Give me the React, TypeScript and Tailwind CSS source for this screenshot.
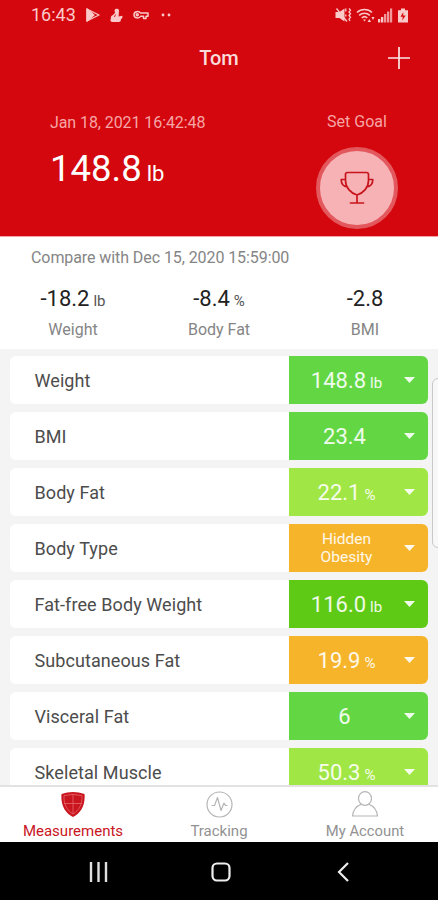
interface Reading {
  value: string;
  unit?: string;
  label: string;
}

interface Measurement extends Reading {
  color: string;
}

const CHANGES: Reading[] = [
  { value: '-18.2', unit: 'lb', label: 'Weight' },
  { value: '-8.4', unit: '%', label: 'Body Fat' },
  { value: '-2.8', label: 'BMI' },
];

const MEASUREMENTS: Measurement[] = [
  { label: 'Weight', value: '148.8', unit: 'lb', color: 'bg-[#63d743]' },
  { label: 'BMI', value: '23.4', color: 'bg-[#63d743]' },
  { label: 'Body Fat', value: '22.1', unit: '%', color: 'bg-[#a0e644]' },
  { label: 'Body Type', value: 'Hidden Obesity', color: 'bg-[#f6b42b]' },
  { label: 'Fat-free Body Weight', value: '116.0', unit: 'lb', color: 'bg-[#5eca15]' },
  { label: 'Subcutaneous Fat', value: '19.9', unit: '%', color: 'bg-[#f6b42b]' },
  { label: 'Visceral Fat', value: '6', color: 'bg-[#63d743]' },
  { label: 'Skeletal Muscle', value: '50.3', unit: '%', color: 'bg-[#a0e644]' },
];

function StatusBar() {
  return (
    <div className="flex h-[30px] items-center justify-between pl-[31px] pr-[29px] text-[#fbc9c9]">
      <div className="flex items-center">
        <span className="w-[54px] text-[18px] leading-[30px]">16:43</span>
        <svg className="ml-px" width="14" height="14" viewBox="0 0 14 14" fill="none" stroke="currentColor" strokeWidth="1.3" strokeLinejoin="round">
          <path d="M1 1v12L13 7z" />
          <path d="M1 1l7 6-7 6z" fill="currentColor" />
        </svg>
        <svg className="ml-[10px]" width="13" height="15" viewBox="0 0 13 15" fill="currentColor">
          <path d="M4.500 2C5.500.3 9 .3 9 2.800L8.600 8.500l3.700-.7c.6 1.800-.3 3-1.500 3.400.4 1.500-.4 2.800-2.300 2.800H2.500C.3 14 0 11.500 1 10.500c-.5-1.400.2-3 1.600-3.200L5 5z" />
          <path d="M5.500 6.500L4.500 9" stroke="#d3070d" strokeWidth=".9" />
        </svg>
        <svg className="ml-[10px]" width="16" height="10" viewBox="0 0 16 10" fill="none" stroke="currentColor" strokeWidth="1.500" strokeLinejoin="round">
          <path d="M7.400 3C6.500 1.200 1 .6 1 4.700S6.500 8.500 7.600 6.200H10.500V8.500H13V6.200H15V3z" />
          <circle cx="4.300" cy="4.700" r="1" />
        </svg>
        <svg className="ml-[12px]" width="12" height="4" viewBox="0 0 12 4" fill="currentColor">
          <circle cx="2" cy="2" r="1.400" />
          <circle cx="8" cy="2" r="1.400" />
        </svg>
      </div>
      <div className="flex items-center">
        {/* Vibrate / muted */}
        <svg width="17" height="16" viewBox="0 0 17 16">
          <path d="M.5 5H4.500l5-3.500v13l-5-3.500H.5z" fill="currentColor" />
          <path d="M1.500 1.500L12 14.500M10.800 1.500v3M10.800 7.500v2M14 1.500l1.500 1.800L14 5l1.500 1.800L14 8.500l1.500 1.800L14 12l1 2" fill="none" stroke="currentColor" strokeWidth="1.300" />
        </svg>
        <svg className="ml-[4px]" width="20" height="15" viewBox="0 0 20 15" fill="none" stroke="currentColor" strokeWidth="1.500">
          <path d="M1 4.500C5 .4 12 .4 16 4.500M3.200 7.400c3-3 7.600-3 10.600 0M5.700 10c1.700-1.600 4-1.600 5.600 0" />
          <path d="M7 11.500h3l-1.500 2z M11.500 14l2-3 1.500 3z M15.500 9h3l-1.500 3z" fill="currentColor" stroke="none" />
        </svg>
        <svg className="ml-[2px]" width="15" height="15" viewBox="0 0 15 15" fill="currentColor">
          <path d="M0 11h2.300v3.500H0zM3 9h2.300v5.500H3z" />
          <path d="M6 6h2.300v8.500H6zM9 3.500h2.300v11H9zM12 .5h2.200v14H12z" opacity=".75" />
        </svg>
        <svg className="ml-[4px]" width="12" height="15" viewBox="0 0 12 15">
          <path d="M4 .5h4v1.800h3v12.200H1V2.300h3z" fill="currentColor" />
          <path d="M6.300 4L3.500 8.700h2.300L5.200 12.500l3.500-5H6.200z" fill="#d3070d" />
        </svg>
      </div>
    </div>
  );
}

function Header() {
  return (
    <header className="h-[236px] shrink-0 bg-[#d3070d]">
      <StatusBar />
      <div className="grid h-[55px] grid-cols-3 items-center px-[28px]">
        <span />
        <h1 className="text-center text-[20px] font-medium leading-[24px] text-[#fbdada]">Tom</h1>
        <svg className="justify-self-end" width="22" height="22" viewBox="0 0 22 22" stroke="#fde6e6" strokeWidth="1.700">
          <path d="M11 0v22M0 11h22" />
        </svg>
      </div>
      <div className="flex justify-between pl-[50px] pr-[40px] pt-[28px]">
        <div>
          <p className="text-[16px] leading-[20px] tracking-[-0.08px] text-[#f7a5a5]">Jan 18, 2021 16:42:48</p>
          <p className="mt-[12px] flex items-baseline text-white">
            <span className="text-[36.500px] leading-[48px]">148.8</span>
            <span className="ml-[5px] text-[22px]">lb</span>
          </p>
        </div>
        <div className="flex flex-col items-center">
          <p className="text-[16px] leading-[18px] text-[#f7a5a5]">Set Goal</p>
          <div className="mt-[16px] flex size-[82px] items-center justify-center rounded-full border-4 border-[#e2585d] bg-[#f6b2b5]">
            <svg width="34" height="34" viewBox="0 0 34 34" fill="none" stroke="#c8141c" strokeWidth="1.700" strokeLinecap="round" strokeLinejoin="round">
              <path d="M5.500 3.500q0-2 2-2h19q2 0 2 2v6c0 7-5 12.500-11.500 14.500C10.500 22 5.500 16.500 5.500 9.500zM5.500 8.500H1.200c0 4.500 2 7 6.300 7.500M28.500 8.500h4.300c0 4.500-2 7-6.300 7.500M17 24v7M10.500 32h13" />
            </svg>
          </div>
        </div>
      </div>
    </header>
  );
}

function Comparison() {
  return (
    <section className="h-[113px] shrink-0 border-t border-[#f6a1a4] bg-white text-[#858585]">
      <p className="pl-[31px] pt-[11px] text-[16px] leading-[20px] tracking-[-0.08px]">Compare with Dec 15, 2020 15:59:00</p>
      <div className="mt-[17px] grid grid-cols-3">
        {CHANGES.map(c => (
          <div key={c.label} className="text-center">
            <p className="flex items-baseline justify-center text-[#222]">
              <span className="text-[22px] leading-[28px]">{c.value}</span>
              {c.unit && <span className="ml-[4px] text-[15px] text-[#555]">{c.unit}</span>}
            </p>
            <p className="mt-[7px] text-[16px] leading-[20px]">{c.label}</p>
          </div>
        ))}
      </div>
    </section>
  );
}

function MeasurementRow({ m }: { m: Measurement }) {
  return (
    <div className="flex h-[48px] shrink-0 overflow-hidden rounded-[6px] bg-white">
      <div className="flex w-[279px] items-center pl-[24.500px] text-[18px] tracking-[0.08px] text-[#4c4c4c]">{m.label}</div>
      <button className={`flex flex-1 items-center pr-[13px] text-white/90 ${m.color}`}>
        {m.value.includes(' ') ? (
          <span className="flex-1 px-5 text-center text-[15.500px] leading-[18px]">{m.value}</span>
        ) : (
          <span className={`flex flex-1 items-baseline justify-center pt-[2px] ${m.unit ? '' : 'pr-[4px]'}`}>
            <span className="text-[22px] leading-[28px]">{m.value}</span>
            {m.unit && <span className="ml-[4px] text-[15px]">{m.unit}</span>}
          </span>
        )}
        <svg width="11" height="6" viewBox="0 0 11 6" fill="currentColor">
          <path d="M0 0h11L5.500 6z" />
        </svg>
      </button>
    </div>
  );
}

function TabBar() {
  return (
    <nav className="grid h-[57px] shrink-0 grid-cols-3 border-t-2 border-[#e2e2e2] bg-white text-[15px] leading-[18px] text-[#929292]">
      <a className="flex flex-col items-center pt-[4px] text-[#c9151e]">
        <svg width="26" height="27" viewBox="0 0 26 27">
          <path d="M1.500 3Q13-1 24.500 3C25.500 14 21 22 13 26 5 22 .5 14 1.500 3z" fill="#c9151e" />
          <path d="M4 4.700Q13 2 22 4.700C22.500 13 19 19.500 13 23 7 19.500 3.500 13 4 4.700zM13 3v20M4 12.500h18" fill="none" stroke="#e8666b" strokeWidth=".8" />
        </svg>
        <span className="mt-[4px]">Measurements</span>
      </a>
      <a className="flex flex-col items-center pt-[4px]">
        <svg width="27" height="27" viewBox="0 0 27 27" fill="none" stroke="#b5b5b5" strokeWidth="1.200" strokeLinejoin="round">
          <circle cx="13.500" cy="13.500" r="12.500" />
          <path d="M5.500 14.500h3l3-8 3.500 13 3-7.500 1.500 2.500h2" />
        </svg>
        <span className="mt-[4px]">Tracking</span>
      </a>
      <a className="flex flex-col items-center pt-[4px]">
        <svg width="28" height="27" viewBox="0 0 28 27" fill="none" stroke="#b5b5b5" strokeWidth="1.200">
          <path d="M10.500 13C5.500 15 2 19 1.500 25h25c-.5-6-4-10-9-12" />
          <ellipse cx="14" cy="7.500" rx="6.500" ry="6.800" />
        </svg>
        <span className="mt-[4px] text-[14.800px]">My Account</span>
      </a>
    </nav>
  );
}

function SystemNav() {
  return (
    <div className="flex h-[58px] shrink-0 items-center bg-black pl-[89px] pt-[2px]">
      <svg width="19" height="20" viewBox="0 0 19 20" stroke="#dedede" strokeWidth="2.400">
        <path d="M2 0v20M9.500 0v20M17 0v20" />
      </svg>
      <svg className="ml-[103px]" width="20" height="20" viewBox="0 0 20 20" fill="none" stroke="#eee" strokeWidth="2.200">
        <rect x="1.500" y="1.500" width="17" height="17" rx="4.500" />
      </svg>
      <svg className="ml-[106px]" width="12" height="20" viewBox="0 0 12 20" fill="none" stroke="#eee" strokeWidth="2.200">
        <path d="M11 1L2 10l9 9" />
      </svg>
    </div>
  );
}

export default function App() {
  return (
    <div className="relative flex h-[900px] w-[438px] flex-col overflow-hidden bg-[#f4f4f4] font-['Roboto',sans-serif]">
      <Header />
      <Comparison />
      <main className="flex min-h-0 flex-1 flex-col gap-2 overflow-hidden px-[10px] pt-[7px]">
        {MEASUREMENTS.map(m => (
          <MeasurementRow key={m.label} m={m} />
        ))}
      </main>
      <TabBar />
      <SystemNav />
      {/* Edge panel handle */}
      <div className="absolute -right-[6px] top-[378px] h-[170px] w-[12px] rounded-[6px] border border-[#c9c9c9] bg-[#f8f8f8]" />
    </div>
  );
}
